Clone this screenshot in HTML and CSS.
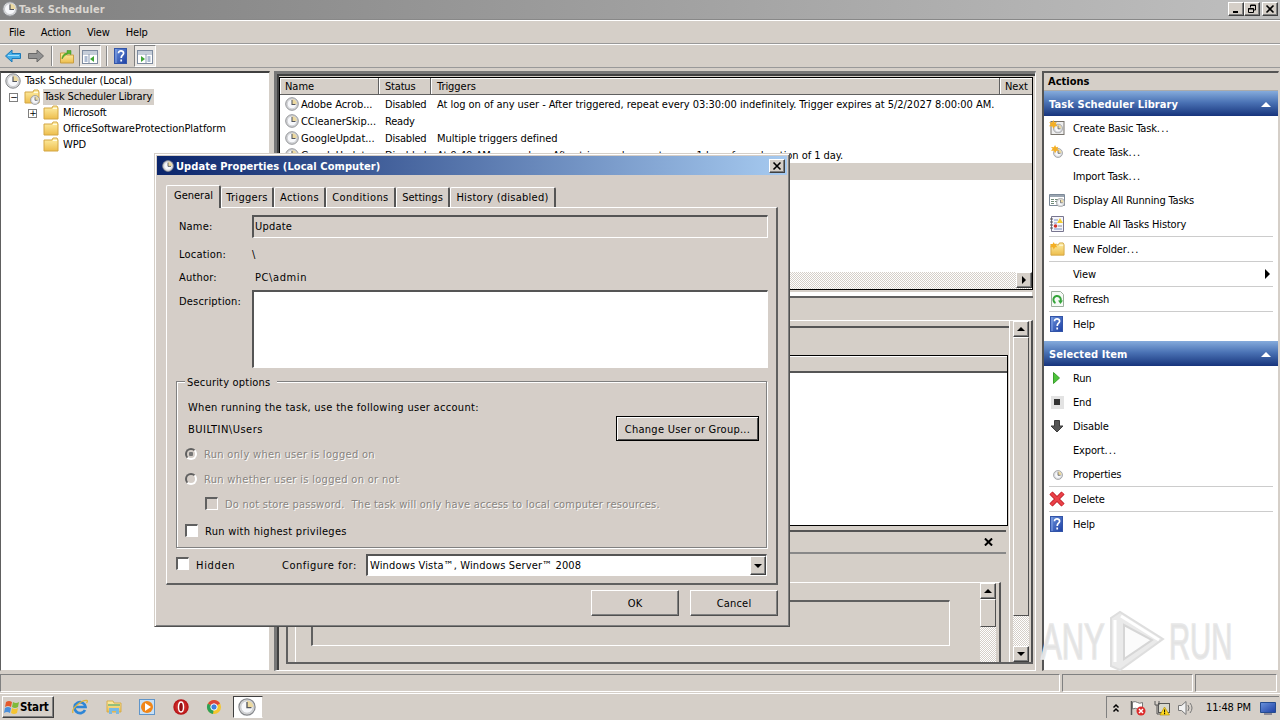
FILE: index.html
```html
<!DOCTYPE html>
<html lang="en">
<head>
  <meta charset="UTF-8" />
  <title>Task Scheduler</title>
  <link rel="stylesheet" href="styles.css">
</head>
<body>
  <svg class="defs" width="0" height="0">
    <defs>
      <linearGradient id="gold" x1="0" y1="0" x2="0" y2="1"><stop offset="0" stop-color="#fff0a8"/><stop offset="1" stop-color="#edbd4c"/></linearGradient>
      <linearGradient id="blue" x1="0" y1="0" x2="1" y2="1"><stop offset="0" stop-color="#6b93dc"/><stop offset="1" stop-color="#1d3fa4"/></linearGradient>
      <radialGradient id="red"><stop offset="0" stop-color="#f05850"/><stop offset="1" stop-color="#b30f12"/></radialGradient>
    </defs>
    <symbol id="clock" viewBox="0 0 16 16">
      <circle cx="8" cy="8" r="7.2" fill="#d9dadb" stroke="#85878b"/>
      <circle cx="8" cy="8" r="5.5" fill="#f7f8fb" stroke="#b5b7bb" stroke-width=".6"/>
      <path d="M8 8V2.5A5.5 5.5 0 0 1 13.5 8z" fill="#ecd9a0"/>
      <path d="M8 3.5V8.5H12" fill="none" stroke="#54575e" stroke-width="1.2"/>
    </symbol>
    <symbol id="folder" viewBox="0 0 16 16">
      <path d="M1 3h8l1-2h4l1 2v11H1z" fill="url(#gold)" stroke="#d3a644"/>
      <path d="M10 3.5h4" stroke="#fffbe0"/>
    </symbol>
    <symbol id="help" viewBox="0 0 16 16">
      <rect x="1.5" y=".5" width="12" height="15" fill="url(#blue)" stroke="#3355a8"/>
      <path d="M3 1v14" stroke="#86a5e6"/>
      <path d="M5.5 5.2C5.5 2 10.7 2.2 10.6 5.2C10.5 7.3 8.2 7.2 8.2 10M8.2 11.5v2" fill="none" stroke="#fff" stroke-width="1.7"/>
    </symbol>
    <symbol id="window" viewBox="0 0 16 16">
      <rect x=".5" y="1.5" width="15" height="13" fill="#fff" stroke="#7d8b9f"/>
      <path d="M1 3h14M1 5h14" stroke="#8b9bb3"/>
      <path d="M2.5 8h3M2.5 10h3M2.5 12h3" stroke="#5b79a5"/>
      <path d="M7 5v9" stroke="#8b9bb3"/>
      <path d="M12 7v6l-4-3z" fill="#3fa535"/>
    </symbol>
    <symbol id="star" viewBox="0 0 16 16">
      <path d="M5 0l1.3 2.8L9 2 7.700 4.700 10 7 6.800 7 5 10 3.700 7 0 7 2 4.700 0 2.500 3.500 2.800z" fill="#f4af24"/>
    </symbol>
  </svg>

  <div class="titlebar">
    <svg class="i16"><use href="#clock"/></svg>
    <b>Task Scheduler</b>
    <div class="caption">
      <span class="cap"><svg viewBox="0 0 12 10"><path d="M3 8h5" stroke="#000" stroke-width="2"/></svg></span>
      <span class="cap"><svg viewBox="0 0 12 10"><path d="M4.500 3.500V1h5v5H7.500M4 1.500h6M2.500 4.500h5v4h-5zM2 5h6" fill="none" stroke="#000"/></svg></span>
      <span class="cap gap"><svg viewBox="0 0 12 10"><path d="M2.500 1.500l7 7M9.500 1.500l-7 7" stroke="#000" stroke-width="1.600"/></svg></span>
    </div>
  </div>
  <div class="menubar"><span>File</span><span>Action</span><span>View</span><span>Help</span></div>
  <div class="toolbar">
    <svg class="i16" viewBox="0 0 16 16"><path d="M.500 8L7 2v3.500h8.500v5H7V14z" fill="#45aee8" stroke="#1b79b8"/><path d="M3 7.500h11" stroke="#a5e0fb"/></svg>
    <svg class="i16 fwd" viewBox="0 0 16 16"><path d="M15.500 8L9 2v3.500H.500v5H9V14z" fill="#929292" stroke="#686868"/></svg>
    <i class="vsep"></i>
    <svg class="i16 up" viewBox="0 0 16 16"><path d="M1.500 5h5l1 2h7v8h-13z" fill="url(#gold)" stroke="#c99e42"/><path d="M3 11C3 7 6 5 8 5V2.500h4v4L10 5.500C7 6 5 8 3 11z" fill="#57b52f" stroke="#398c1c" stroke-width=".5"/></svg>
    <span class="tbtn"><svg class="i16"><use href="#window"/></svg></span>
    <i class="vsep two"></i>
    <svg class="i16 q"><use href="#help"/></svg>
    <span class="tbtn last"><svg class="i16 flip"><use href="#window"/></svg></span>
  </div>

  <div class="main">
    <div class="tree">
      <div class="node"><svg class="i16"><use href="#clock"/></svg><span>Task Scheduler (Local)</span></div>
      <div class="node lib"><i class="box">&minus;</i><svg class="i16" viewBox="0 0 16 16"><use href="#folder"/><use href="#clock" x="6" y="6" width="10" height="10"/></svg><span class="sel">Task Scheduler Library</span></div>
      <div class="node sub"><i class="box">+</i><svg class="i16"><use href="#folder"/></svg><span>Microsoft</span></div>
      <div class="node sub leaf"><svg class="i16"><use href="#folder"/></svg><span class="wide">OfficeSoftwareProtectionPlatform</span></div>
      <div class="node sub leaf"><svg class="i16"><use href="#folder"/></svg><span>WPD</span></div>
    </div>

    <div class="centre">
      <div class="list">
        <div class="row head"><span>Name</span><span>Status</span><span>Triggers</span><span>Next</span></div>
        <div class="row"><span><svg class="i14"><use href="#clock"/></svg>Adobe Acrob...</span><span>Disabled</span><span>At log on of any user - After triggered, repeat every 03:30:00 indefinitely. Trigger expires at 5/2/2027 8:00:00 AM.</span></div>
        <div class="row"><span><svg class="i14"><use href="#clock"/></svg>CCleanerSkip...</span><span>Ready</span><span></span></div>
        <div class="row"><span><svg class="i14"><use href="#clock"/></svg>GoogleUpdat...</span><span>Disabled</span><span>Multiple triggers defined</span></div>
        <div class="row"><span><svg class="i14"><use href="#clock"/></svg>GoogleUpdat...</span><span>Disabled</span><span>At 9:49 AM every day - After triggered, repeat every 1 hour for a duration of 1 day.</span></div>
        <div class="row picked"></div>
        <div class="hscroll"><span class="sbtn"><svg viewBox="0 0 8 8"><path d="M2 0v8l4-4z"/></svg></span></div>
      </div>
      <div class="detail">
        <div class="detail-head"></div>
        <div class="detail-body">
          <div class="left-col">
            <div class="strip"></div>
            <div class="grid"><div class="grid-head"></div></div>
            <div class="acts-head"><svg viewBox="0 0 10 9"><path d="M1 .500l8 8M9 .500l-8 8" stroke="#000" stroke-width="2.200"/></svg></div>
            <div class="tabs-low">
              <div class="low-page"><div class="low-box"></div></div>
              <div class="vscroll small"><span class="sbtn"><svg viewBox="0 0 8 8"><path d="M0 6h8L4 2z"/></svg></span><span class="thumb"></span></div>
            </div>
          </div>
          <div class="vscroll"><span class="sbtn"><svg viewBox="0 0 8 8"><path d="M0 6h8L4 2z"/></svg></span><span class="thumb"></span><span class="sbtn end"><svg viewBox="0 0 8 8"><path d="M0 2h8L4 6z"/></svg></span></div>
        </div>
      </div>
    </div>

    <div class="actions">
      <div class="actions-title">Actions</div>
      <div class="section">Task Scheduler Library<svg viewBox="0 0 10 5"><path d="M0 5h10L5 0z" fill="#fff"/></svg></div>
      <div class="act"><svg class="i16" viewBox="0 0 16 16"><rect x="2" y="1.500" width="13" height="13" fill="#eee" stroke="#77736c"/><use href="#clock" x="4" y="3.500" width="10" height="10"/><use href="#star" width="14" height="14"/></svg><span>Create Basic Task<s>...</s></span></div>
      <div class="act"><svg class="i16" viewBox="0 0 16 16"><use href="#clock" x="4" y="4" width="10" height="10"/><use href="#star" x="2" y="1" width="13" height="13"/></svg><span>Create Task<s>...</s></span></div>
      <div class="act"><i class="i16"></i><span>Import Task<s>...</s></span></div>
      <div class="act"><svg class="i16" viewBox="0 0 16 16"><path d="M.500 2.500h15v11H.500z" fill="#fff" stroke="#7c8998"/><path d="M1 4h14" stroke="#9aa5b1" stroke-width="2"/><path d="M2 7.500h3M6 7.500h4M2 9.500h3M6 9.500h2M2 11.500h3" stroke="#708b78"/><use href="#clock" x="7" y="6" width="9" height="9"/></svg>Display All Running Tasks</div>
      <div class="act"><svg class="i16" viewBox="0 0 16 16"><path d="M2.500.500h12v15h-12z" fill="#f5f5fa" stroke="#77758f"/><path d="M1 3h3M1 6h3M1 9h3M1 12h3" stroke="#555"/><path d="M5 4h4M5 7h3M5 13h8" stroke="#7c8fc5"/><path d="M8 7l3-5 3 5z" fill="#f3cd2e"/><circle cx="6.500" cy="10" r="1.800" fill="#d3322b"/><path d="M9 10h4" stroke="#888"/></svg>Enable All Tasks History</div>
      <div class="act line"><svg class="i16" viewBox="0 0 16 16"><use href="#folder" x="1" y="1" width="15" height="15"/><use href="#star" x="1" y="1" width="12" height="12"/></svg><span>New Folder<s>...</s></span></div>
      <div class="act line"><i class="i16"></i>View<svg class="more" viewBox="0 0 5 10"><path d="M0 0v10l5-5z"/></svg></div>
      <div class="act line"><svg class="i16" viewBox="0 0 16 16"><path d="M2.500.500h9l3 3v12h-12z" fill="#f6faf6" stroke="#9caf9d"/><path d="M6.500 12A3.700 3.700 0 1 1 11 11" fill="none" stroke="#35a53a" stroke-width="2"/><path d="M9 9.500h5L11.500 13z" fill="#35a53a"/></svg>Refresh</div>
      <div class="act line"><svg class="i16"><use href="#help"/></svg>Help</div>
      <div class="section second">Selected Item<svg viewBox="0 0 10 5"><path d="M0 5h10L5 0z" fill="#fff"/></svg></div>
      <div class="act"><svg class="i16" viewBox="0 0 16 16"><path d="M4.500 2.500v11l6-5.500z" fill="#4cc43a" stroke="#3b9f2d"/></svg>Run</div>
      <div class="act"><svg class="i16" viewBox="0 0 16 16"><path d="M2 2h13v13H2z" fill="#e3e3e3"/><path d="M5 5h6v6H5z" fill="#333"/></svg>End</div>
      <div class="act"><svg class="i16" viewBox="0 0 16 16"><path d="M5.500 2.500h5V8h3.500L8 14 2 8h3.500z" fill="#555" stroke="#3d3d3d"/></svg>Disable</div>
      <div class="act"><i class="i16"></i><span>Export<s>...</s></span></div>
      <div class="act"><svg class="i16" viewBox="0 0 16 16"><use href="#clock" x="4" y="4" width="10" height="10"/></svg>Properties</div>
      <div class="act line"><svg class="i16" viewBox="0 0 16 16"><path d="M2 2l12 12M14 2L2 14" stroke="#b41820" stroke-width="4.500"/><path d="M2 2l12 12M14 2L2 14" stroke="#ea4148" stroke-width="3"/></svg>Delete</div>
      <div class="act line"><svg class="i16"><use href="#help"/></svg>Help</div>
    </div>
  </div>

  <div class="status"><span></span><span></span><span></span></div>

  <div class="taskbar">
    <div class="start"><svg viewBox="0 0 16 16"><path d="M2 3Q5 1 8 3L7 8Q4 6 1 8z" fill="#e45a2c"/><path d="M9 3Q12 5 15 3L14 8Q11 10 8 8z" fill="#7fba3a"/><path d="M1 9Q4 7 7 9L6 14Q3 12 0 14z" fill="#4a8fdb"/><path d="M8 9Q11 11 14 9L13 14Q10 16 7 14z" fill="#f5c431"/></svg>Start</div>
    <svg class="quick" viewBox="0 0 16 16"><path d="M13 11A5.500 5.500 0 1 1 13.500 8H4" fill="none" stroke="#2e86d6" stroke-width="2.700"/><path d="M1 14C-1 10 9 1 15 1.500Q16 2 14.500 4" fill="none" stroke="#dfb53b" stroke-width="1.300"/></svg>
    <svg class="quick" viewBox="0 0 16 16"><path d="M1 2h6l1 2h7v9H1z" fill="url(#gold)" stroke="#d6ad4e"/><path d="M2 6h12" stroke="#72b477" stroke-width="1.500"/><path d="M3 15V9h10v6h-3v-3H6v3z" fill="#79b9e3"/></svg>
    <svg class="quick" viewBox="0 0 16 16"><rect x=".500" y=".500" width="15" height="15" fill="#c7e0f6" stroke="#6095c9"/><circle cx="8" cy="8" r="6" fill="#f18618"/><path d="M6 4v8l6-4z" fill="#fff"/></svg>
    <svg class="quick" viewBox="0 0 16 16"><circle cx="8" cy="8" r="7.700" fill="url(#red)"/><ellipse cx="8" cy="8" rx="2.500" ry="5" fill="#931014" stroke="#fff" stroke-width="1.400"/></svg>
    <svg class="quick chrome" viewBox="0 0 16 16"><circle cx="8" cy="8" r="7" fill="#f5c62e"/><path d="M8 8L1.900 4.500A7 7 0 0 0 7 15z" fill="#2da058"/><path d="M2 4.500A7 7 0 0 1 14 4.500L8 8z" fill="#dd4438"/><circle cx="8" cy="8" r="3.200" fill="#3f80dd" stroke="#fff"/></svg>
    <div class="running"><svg class="i18"><use href="#clock"/></svg></div>
    <div class="tray">
      <svg class="chev" viewBox="0 0 8 10"><path d="M1.500 4.500L4 2l2.500 2.500M1.500 8.500L4 6l2.500 2.500" fill="none" stroke="#000" stroke-width="1.500"/></svg>
      <svg class="i16 flag" viewBox="0 0 16 16"><path d="M1.500 1v14" stroke="#555" stroke-width="1.500"/><path d="M2.500 2q3-1 5 .500t5 0v7q-3 1-5-.500t-5 0z" fill="#fff" stroke="#777"/><circle cx="11" cy="11" r="4.500" fill="#dc2c2c"/><path d="M9 9l4 4M13 9l-4 4" stroke="#fff" stroke-width="1.500"/></svg>
      <svg class="i16 net" viewBox="0 0 16 16"><rect x="4.500" y="3.500" width="11" height="9" fill="#d7d7cc" stroke="#555"/><path d="M1 1v4h4V1M3 5v9h5" fill="none" stroke="#555"/><path d="M6 15l4.500-8 5 8z" fill="#ffd91f" stroke="#ad8a00" stroke-width=".6"/><path d="M10.600 9.500v3M10.600 13v1.200" stroke="#000"/></svg>
      <svg class="i16 vol" viewBox="0 0 16 16"><path d="M.500 5.500h3L8 1.500v13l-4.500-4h-3z" fill="#f2f2f2" stroke="#777"/><path d="M10 5q2 3 0 6M12 3q4 5 0 10" fill="none" stroke="#777"/></svg>
      <span class="time">11:48 PM</span>
      <svg class="i16 show" viewBox="0 0 16 16"><path d="M.500 2.500h15v10H.500z" fill="url(#blue)" stroke="#244b8f"/><path d="M4 14h8" stroke="#446"/></svg>
    </div>
  </div>

  <svg class="watermark" viewBox="0 0 240 70">
    <g class="wm-text"><text transform="translate(1 54) scale(.62 1)">ANY</text><text transform="translate(129 54) scale(.585 1)">RUN</text></g>
    <path d="M71 61V13l9-6 43 27-43 31z" fill="#dfdfdf" fill-opacity=".65" stroke="#dedede" stroke-width="2"/>
    <path d="M84 20v34l28-19z" fill="#fff" fill-opacity=".8" stroke="#d6d6d6" stroke-width="2"/>
    <path d="M75 57V15M81 11l38 24" stroke="#fff" stroke-width="3" fill="none"/>
  </svg>

  <div class="dialog">
    <div class="dlg-title"><svg class="i12"><use href="#clock"/></svg><b>Update Properties (Local Computer)</b><span class="cap"><svg viewBox="0 0 12 10"><path d="M2.500 1.500l7 7M9.500 1.500l-7 7" stroke="#000" stroke-width="1.600"/></svg></span></div>
    <div class="tabs">
      <span class="tab on">General</span><span class="tab t2">Triggers</span><span class="tab t3">Actions</span><span class="tab t4">Conditions</span><span class="tab t5">Settings</span><span class="tab t6">History (disabled)</span>
    </div>
    <div class="page">
      <div class="field name"><label>Name:</label><div class="input">Update</div></div>
      <div class="field loc"><label>Location:</label><span>\</span></div>
      <div class="field author"><label>Author:</label><span>PC\admin</span></div>
      <div class="field desc"><label>Description:</label><div class="area"></div></div>
      <div class="group">
        <div class="legend">Security options</div>
        <p class="when">When running the task, use the following user account:</p>
        <div class="user"><span>BUILTIN\Users</span><span class="btn change">Change User or Group...</span></div>
        <div class="opt r1"><i class="radio dot"></i>Run only when user is logged on</div>
        <div class="opt r2"><i class="radio"></i>Run whether user is logged on or not</div>
        <div class="opt store"><i class="check grey"></i>Do not store password.&nbsp; The task will only have access to local computer resources.</div>
        <div class="opt priv"><i class="check"></i>Run with highest privileges</div>
      </div>
      <div class="bottom">
        <i class="check"></i><span class="hidden">Hidden</span><span class="conf">Configure for:</span>
        <div class="combo"><span>Windows Vista™, Windows Server™ 2008</span><span class="sbtn"><svg viewBox="0 0 8 8"><path d="M0 2h8L4 6z"/></svg></span></div>
      </div>
    </div>
    <div class="buttons"><span class="btn">OK</span><span class="btn">Cancel</span></div>
  </div>
</body>
</html>
```

FILE: styles.css
```css
* {
  box-sizing: border-box;
}
body {
  margin: 0;
  width: 1280px;
  height: 720px;
  overflow: hidden;
  position: relative;
  display: flex;
  flex-direction: column;
  background: #d5cfc8;
  color: #000;
  font-family: "DejaVu Sans Condensed", "DejaVu Sans", sans-serif;
  font-size: 11px;
  letter-spacing: -0.16px;
  white-space: nowrap;
}
svg {
  display: block;
  flex: none;
}
s {
  text-decoration: none;
  letter-spacing: 1.2px;
}
.defs {
  position: absolute;
}
.i12 { width: 12px; height: 12px; }
.i14 { width: 14px; height: 14px; }
.i16 { width: 16px; height: 16px; flex: none; }
.i18 { width: 18px; height: 18px; }

/* window frame */
.titlebar {
  height: 19px;
  flex: none;
  display: flex;
  align-items: center;
  padding: 0 2px 1px 2px;
  background: linear-gradient(90deg, #808080, #bfbfbf);
  color: #dad6d0;
}
.titlebar b {
  margin-left: 1px;
  letter-spacing: 0.15px;
}
.caption {
  margin-left: auto;
  display: flex;
}
.cap {
  width: 16px;
  height: 14px;
  padding: 1px;
  background: #d5cfc8;
  border: 1px solid;
  border-color: #fff #404040 #404040 #fff;
  box-shadow: inset -1px -1px #808080;
}
.cap svg {
  width: 12px;
  height: 10px;
}
.gap {
  margin-left: 2px;
}
.menubar {
  height: 25px;
  flex: none;
  display: flex;
  align-items: center;
  gap: 16px;
  padding: 2px 0 0 9px;
  border-top: 1px solid #888;
  border-bottom: 1px solid #999;
  box-shadow: inset 0 1px #fff;
}
.toolbar {
  height: 24px;
  flex: none;
  display: flex;
  align-items: center;
  padding-left: 5px;
  border-top: 1px solid #fff;
  border-bottom: 1px solid #999;
}
.fwd { margin-left: 7px; }
.vsep {
  width: 2px;
  height: 20px;
  margin-left: 7px;
  border-left: 1px solid #888;
  border-right: 1px solid #fff;
}
.up { margin-left: 6px; }
.tbtn {
  width: 22px;
  height: 22px;
  margin-left: 4px;
  padding: 3px 2px;
  background: #ebe8e4;
  border: 1px solid;
  border-color: #808080 #fff #fff #808080;
}
.two { margin-left: 5px; }
.q { margin-left: 5px; }
.last { margin-left: 5px; }
.flip { transform: scaleX(-1); }

.main {
  flex: none;
  height: 600px;
  margin-top: 3px;
  display: flex;
}

/* console tree */
.tree {
  width: 270px;
  background: #fff;
  border: 1px solid;
  border-color: #404040 #d5cfc8 #d5cfc8 #606060;
  border-top-width: 2px;
  margin-right: 4px;
}
.node {
  height: 16px;
  display: flex;
  align-items: center;
  padding-left: 4px;
}
.node span {
  margin-left: 4px;
  line-height: 16px;
}
.node .wide { letter-spacing: -0.05px; }
.lib { padding-left: 8px; }
.lib svg { margin-left: 6px; }
.node .sel {
  margin-left: 3px;
  padding: 0 2px 0 1px;
  background: #d5cfc8;
}
.sub { padding-left: 26px; }
.sub svg { margin-left: 6px; }
.leaf { padding-left: 36px; }
.box {
  width: 9px;
  height: 9px;
  border: 1px solid #808080;
  font: normal 9px/7px "DejaVu Sans";
  text-align: center;
  letter-spacing: -1px;
}
.sub .box { margin-left: 1px; }

/* task list */
.centre {
  width: 762px;
  display: flex;
  flex-direction: column;
  border-left: 3px solid #777;
  border-bottom: 1px solid #fff;
  border-top: 3px solid #777;
  border-right: 1px solid #fff;
  box-shadow: inset 2px 2px #404040;
  padding: 3px 2px 0 2px;
}
.list {
  height: 213px;
  display: flex;
  flex-direction: column;
  background: #fff;
  border: 1px solid #000;
}
.row {
  height: 17px;
  flex: none;
  display: flex;
  align-items: center;
  letter-spacing: -0.04px;
}
.row > span {
  flex: none;
  display: flex;
  align-items: center;
  gap: 2px;
  padding-top: 1px;
}
.row > span:nth-child(1) { width: 99px; padding-left: 5px; }
.row > span:nth-child(2) { width: 52px; padding-left: 6px; letter-spacing: -0.2px; }
.row > span:nth-child(3) { width: 569px; padding-left: 6px; }
.row > span:nth-child(4) { flex: 1; padding-left: 5px; overflow: hidden; }
.head {
  background: #d5cfc8;
  border-bottom: 1px solid #606060;
}
.head > span {
  height: 16px;
  border-right: 1px solid #606060;
  box-shadow: inset 1px 1px #fff;
}
.head > span:last-child { border-right: 0; }
.picked { background: #d5cfc8; }
.hscroll {
  margin-top: auto;
  height: 17px;
  display: flex;
  justify-content: flex-end;
}
.hscroll,
.vscroll {
  background: repeating-conic-gradient(#fff 0 25%, #d5cfc8 0 50%) 0 0 / 2px 2px;
}
.sbtn {
  width: 16px;
  height: 16px;
  flex: none;
  background: #d5cfc8;
  border: 1px solid;
  border-color: #fff #404040 #404040 #fff;
  box-shadow: inset -1px -1px #808080;
  display: flex;
  align-items: center;
  justify-content: center;
}
.sbtn svg {
  width: 8px;
  height: 8px;
}

/* task detail */
.detail {
  flex: 1;
  margin: 6px 0 6px 7px;
  border-top: 2px solid #606060;
  border-bottom: 2px solid #606060;
  border-left: 2px solid #606060;
  box-shadow: 0 -5px 0 -1px #fff, 0 -4px #d5cfc8;
  display: flex;
  flex-direction: column;
}
.detail-head {
  height: 22px;
}
.detail-body {
  flex: 1;
  display: flex;
  border-top: 1px solid #fff;
  border-right: 2px solid #505050;
}
.left-col {
  width: 722px;
  padding-top: 5px;
  border-right: 1px solid #fff;
  margin-right: 3px;
  display: flex;
  flex-direction: column;
}
.strip {
  height: 29px;
  border-top: 2px solid #555;
}
.grid {
  height: 171px;
  margin-right: 1px;
  background: #fff;
  border: 1px solid #000;
}
.grid-head {
  height: 17px;
  background: #d5cfc8;
  border-top: 1px solid #fff;
  border-bottom: 2px solid #555;
}
.acts-head {
  height: 24px;
  margin: 4px 3px 0 0;
  padding: 0 13px 0 0;
  display: flex;
  align-items: center;
  justify-content: flex-end;
  border-top: 2px solid #555;
  border-bottom: 2px solid #888;
}
.acts-head svg {
  width: 9px;
  height: 8px;
}
.tabs-low {
  flex: 1;
  margin: 28px 8px 0 7px;
  padding-right: 3px;
  display: flex;
  border-top: 1px solid #fff;
  border-left: 1px solid #fff;
  border-right: 2px solid #555;
}
.low-page {
  flex: 1;
}
.low-box {
  height: 46px;
  margin: 17px 30px 0 15px;
  border: 1px solid #fff;
  border-top: 2px solid #606060;
  border-left: 2px solid #606060;
}
.vscroll {
  width: 16px;
  display: flex;
  flex-direction: column;
}
.thumb {
  height: 279px;
  background: #d5cfc8;
  border: 1px solid;
  border-color: #fff #505050 #505050 #fff;
}
.small .thumb { height: 28px; }
.end { margin-top: auto; }

/* actions pane */
.actions {
  width: 237px;
  margin-left: 6px;
  background: #fff;
  border-left: 2px solid #555;
  border-top: 2px solid #555;
  border-right: 1px solid #d5cfc8;
  border-bottom: 1px solid #d5cfc8;
}
.actions-title {
  height: 18px;
  padding-left: 4px;
  line-height: 18px;
  font-weight: bold;
  letter-spacing: 0;
  background: #d5cfc8;
  border-bottom: 1px solid #aaa;
}
.section {
  height: 25px;
  display: flex;
  align-items: center;
  justify-content: space-between;
  padding: 1px 7px 0 5px;
  background: linear-gradient(#85abdc, #4b73b5 45%, #17347c);
  color: #fff;
  font-weight: bold;
  letter-spacing: 0.1px;
}
.section svg {
  width: 10px;
  height: 5px;
}
.second { margin-top: 5px; }
.act {
  height: 24px;
  margin: 0 5px;
  display: flex;
  align-items: center;
  gap: 8px;
}
.line {
  height: 25px;
  border-top: 1px solid #ccc;
}
.more {
  width: 5px;
  height: 10px;
  margin-left: auto;
  margin-right: 3px;
}

.status {
  height: 18px;
  margin-top: 3px;
  flex: none;
  display: flex;
  gap: 2px;
}
.status span {
  width: 82px;
  border: 1px solid;
  border-color: #808080 #fff #fff #808080;
}
.status span:first-child { width: 1060px; }
.status span:nth-child(2) { width: 131px; }

/* taskbar */
.taskbar {
  flex: none;
  height: 27px;
  margin-top: 1px;
  border-top: 1px solid #fff;
  padding-left: 2px;
  display: flex;
  align-items: center;
}
.start {
  width: 52px;
  height: 22px;
  margin-right: 18px;
  padding-left: 1px;
  display: flex;
  align-items: center;
  font-size: 11.5px;
  font-weight: bold;
  border: 1px solid;
  border-color: #fff #404040 #404040 #fff;
  box-shadow: inset -1px -1px #808080;
}
.start svg {
  width: 16px;
  height: 16px;
}
.quick {
  width: 16px;
  height: 16px;
  margin-right: 17.5px;
}
.chrome {
  margin-right: 11px;
}
.running {
  width: 30px;
  height: 22px;
  padding: 1px 4px;
  background: #fff;
  border: 1px solid;
  border-color: #404040 #d5cfc8 #fff #404040;
}
.tray {
  width: 173px;
  height: 22px;
  margin-left: auto;
  margin-right: 1px;
  padding-left: 5px;
  display: flex;
  align-items: center;
  border-top: 1px solid #808080;
  border-left: 1px solid #808080;
}
.chev { width: 8px; height: 10px; }
.flag { margin-left: 10px; }
.net { margin-left: 8px; }
.vol { margin-left: 8px; }
.time { margin-left: 12px; }
.show { margin-left: auto; margin-right: 3px; }

.watermark {
  position: absolute;
  left: 1040px;
  top: 605px;
  width: 240px;
  height: 70px;
}
.wm-text {
  font: 50px "Liberation Sans", sans-serif;
  letter-spacing: 0;
  fill: #e3e3e3;
  stroke: #e8e8e8;
  stroke-width: 1.5px;
}

/* properties dialog */
.dialog {
  position: absolute;
  left: 154px;
  top: 153px;
  width: 636px;
  height: 474px;
  padding: 1px;
  display: flex;
  flex-direction: column;
  background: #d5cec8;
  border: 1px solid;
  border-color: #d5cfc8 #505050 #505050 #d5cfc8;
  box-shadow: inset 1px 1px #fff, inset -1px -1px #808080;
  letter-spacing: 0.2px;
}
.dlg-title {
  height: 19px;
  flex: none;
  margin: 1px;
  display: flex;
  align-items: center;
  padding: 1px 2px 0 5px;
  background: linear-gradient(90deg, #0b256b, #a6caf0);
  color: #fff;
}
.dlg-title b {
  margin-left: 2px;
  letter-spacing: 0.07px;
}
.dlg-title .cap {
  margin-left: auto;
}
.tabs {
  height: 22px;
  margin: 9px 0 0 10px;
  display: flex;
  align-items: flex-end;
}
.tab {
  height: 20px;
  line-height: 20px;
  text-align: center;
  border-top: 1px solid #fff;
  border-left: 1px solid #fff;
  border-right: 2px solid #555;
  border-radius: 2px 2px 0 0;
  letter-spacing: 0;
}
.on {
  width: 55px;
  height: 23px;
  margin-bottom: -1px;
  padding-left: 1px;
  background: #d5cec8;
  z-index: 1;
}
.t2 { width: 53px; letter-spacing: 0.3px; }
.t3 { width: 52px; letter-spacing: 0.4px; }
.t4 { width: 70px; letter-spacing: 0.4px; }
.t5 { width: 54px; }
.t6 { width: 106px; letter-spacing: 0.25px; }
.page {
  height: 378px;
  margin: 0 10px;
  border: 1px solid #fff;
  border-right: 2px solid #606060;
  border-bottom: 2px solid #606060;
}
.field {
  display: flex;
  align-items: center;
  padding-left: 12px;
}
.field label {
  width: 73px;
  flex: none;
}
.name { margin-top: 7px; height: 23px; }
.input,
.area {
  width: 516px;
  height: 23px;
  padding-left: 1px;
  line-height: 19px;
  border: 1px solid #fff;
  border-top: 2px solid #555;
  border-left: 2px solid #555;
}
.loc { margin-top: 4px; height: 24px; }
.author { height: 23px; }
.author span { margin-left: 3px; letter-spacing: 0.6px; }
.desc { height: 78px; margin-top: 1px; align-items: flex-start; }
.desc label { padding-top: 5px; }
.area { height: 78px; background: #fff; }
.group {
  width: 591px;
  height: 167px;
  margin: 13px 0 0 9px;
  border: 1px solid #808080;
  box-shadow: 1px 1px #fff, inset 1px 1px #fff;
}
.legend {
  width: 92px;
  height: 14px;
  margin: -7px 0 0 8px;
  padding-left: 2px;
  line-height: 16px;
  background: #d5cec8;
}
.when {
  margin: 11px 0 0 11px;
  height: 14px;
  line-height: 16px;
  letter-spacing: 0.3px;
}
.user {
  height: 25px;
  margin: 2px 7px 0 11px;
  display: flex;
  align-items: center;
  justify-content: space-between;
}
.user > span:first-child {
  padding-top: 2px;
  letter-spacing: 0.5px;
}
.btn {
  width: 88px;
  height: 26px;
  line-height: 26px;
  text-align: center;
  border: 1px solid;
  border-color: #fff #505050 #505050 #fff;
  box-shadow: inset -1px -1px #808080;
}
.user .change {
  width: 143px;
  height: 25px;
  letter-spacing: 0.25px;
  border-color: #000;
  box-shadow: inset 1px 1px #fff, inset -1px -1px #505050;
}
.opt {
  height: 25px;
  display: flex;
  align-items: center;
  padding: 2px 0 0 8px;
}
.r1, .r2, .store {
  color: #888480;
  text-shadow: 1px 1px #fff;
  letter-spacing: 0.24px;
}
.r1, .r2 { letter-spacing: 0.32px; }
.radio {
  width: 12px;
  height: 12px;
  margin: -2px 7px 0 0;
  border-radius: 50%;
  border: 2px solid;
  border-color: #606060 #fff #fff #606060;
}
.dot { background: radial-gradient(circle, #777 0 2px, transparent 2.500px); }
.store { padding-left: 28px; }
.check {
  width: 13px;
  height: 13px;
  margin: -3px 7px 0 0;
  background: #fff;
  border: 1px solid #fff;
  border-top: 2px solid #606060;
  border-left: 2px solid #606060;
}
.grey { background: #d5cec8; }
.priv { height: 29px; letter-spacing: 0.28px; }
.bottom {
  height: 22px;
  margin: 6px 9px 0 9px;
  display: flex;
  align-items: center;
}
.hidden, .conf { padding-top: 1px; }
.hidden { width: 86px; letter-spacing: 0.7px; }
.conf { width: 84px; letter-spacing: 0.5px; }
.combo {
  flex: 1;
  height: 22px;
  padding-left: 2px;
  display: flex;
  align-items: center;
  justify-content: space-between;
  background: #fff;
  border: 1px solid #fff;
  border-top: 2px solid #555;
  border-left: 2px solid #555;
  letter-spacing: 0.15px;
}
.combo .sbtn { height: 19px; }
.buttons {
  margin: 5px 10px 0 0;
  display: flex;
  justify-content: flex-end;
  gap: 11px;
}
```
